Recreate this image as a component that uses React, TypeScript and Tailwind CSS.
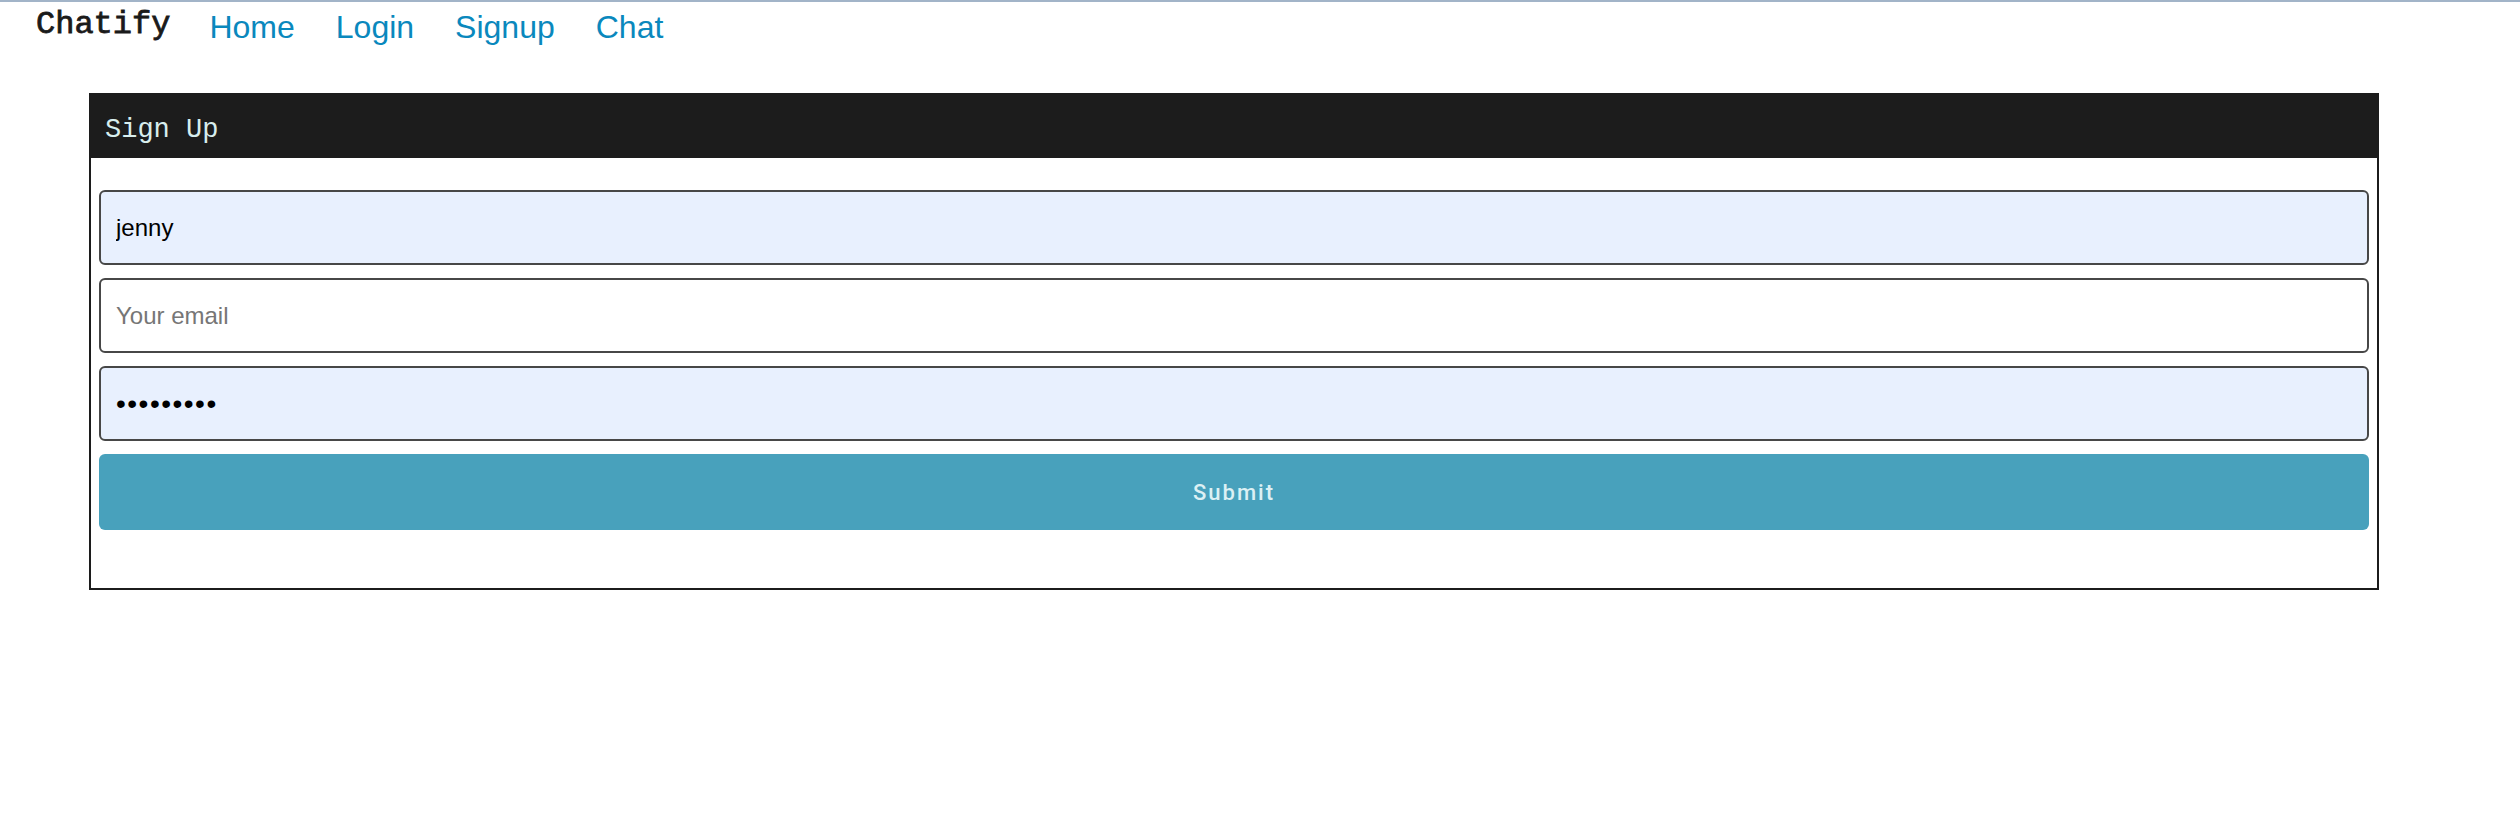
import React from 'react';

const mono = { fontFamily: '"Liberation Mono", "DejaVu Sans Mono", monospace' };

const links = ['Home', 'Login', 'Signup', 'Chat'];

const Nav: React.FC = () => {
  return (
    <nav className="flex items-start pl-[36px] pt-[7px] h-[60px]">
      <span className="text-[32px] leading-none text-[#1a1a1a] mr-[39px] [-webkit-text-stroke:0.8px_#1a1a1a]" style={mono}>
        Chatify
      </span>
      <div className="flex items-start gap-[41px] font-['Liberation_Sans',Arial,sans-serif]">
        {links.map((l) => (
          <a key={l} href="#" className="text-[32px] leading-[36px] text-[#0a88bd] no-underline">
            {l}
          </a>
        ))}
      </div>
    </nav>
  );
};

const inputClass =
  'w-full h-[75px] border-2 border-[#474747] rounded-[6px] pl-[15px] pr-4 text-black outline-none placeholder:text-[#767676] font-["Liberation_Sans",Arial,sans-serif]';

const SignUpCard: React.FC = () => {
  return (
    <div className="ml-[89px] w-[2290px] mt-[31px] border-2 border-[#1c1c1c]">
      <div className="h-[63px] bg-[#1c1c1c] flex items-center px-[14px] pt-[8px]">
        <h3 className="text-[27px] leading-none text-[#d8eeee]" style={mono}>
          Sign Up
        </h3>
      </div>
      <form className="flex flex-col gap-[13px] px-[8px] pt-[32px] pb-[58px]" onSubmit={(e) => e.preventDefault()}>
        <input type="text" readOnly defaultValue="jenny" className={inputClass + ' text-[24px] bg-[#e8f0fe]'} />
        <input type="email" readOnly placeholder="Your email" className={inputClass + ' text-[24px] bg-white'} />
        <input
          type="password"
          readOnly
          defaultValue="123456789"
          className={inputClass + ' text-[28px] tracking-[1.5px] bg-[#e8f0fe]'}
        />
        <button
          type="submit"
          className="w-full h-[76px] rounded-[6px] bg-[#48a1bc] text-[#dcf0f4] text-[22px] font-medium tracking-[2px] font-['Roboto',sans-serif]"
        >
          Submit
        </button>
      </form>
    </div>
  );
};

export default function App() {
  return (
    <div className="w-[2520px] h-[832px] bg-white border-t-2 border-[#a2b4c8]">
      <Nav />
      <SignUpCard />
    </div>
  );
}
